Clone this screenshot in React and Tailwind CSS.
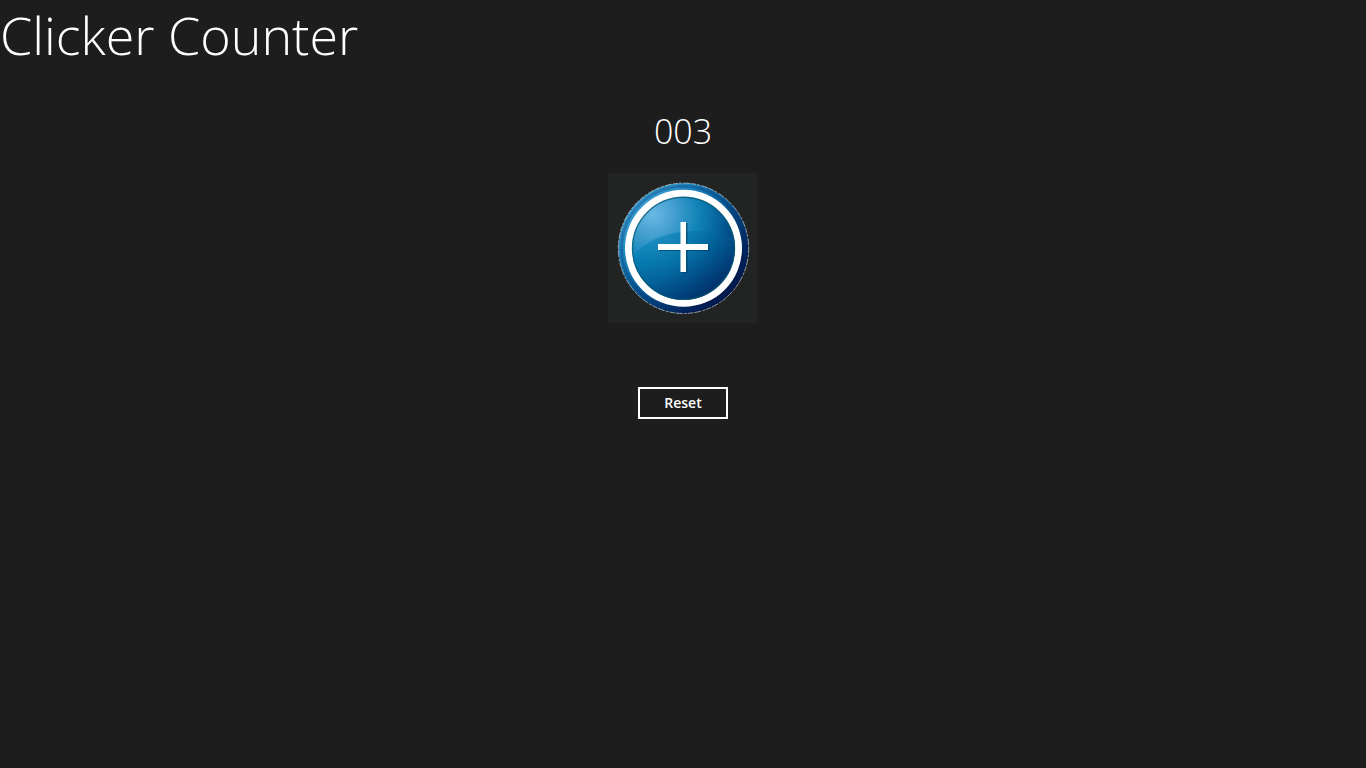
import { useState } from "react";

// Glossy round plus icon
const PlusIcon = () => (
  <svg viewBox="0 0 150 150" className="w-full h-full" aria-hidden="true">
    <defs>
      <linearGradient id="rim" x1="0.1" y1="0.1" x2="0.88" y2="0.88">
        <stop offset="0" stopColor="#46a9dc" />
        <stop offset="0.25" stopColor="#1c84bd" />
        <stop offset="0.55" stopColor="#04508c" />
        <stop offset="0.85" stopColor="#021f56" />
        <stop offset="1" stopColor="#010f3c" />
      </linearGradient>
      <radialGradient id="face" cx="0.2" cy="0.17" r="0.95">
        <stop offset="0" stopColor="#6bb9e4" />
        <stop offset="0.22" stopColor="#449fd0" />
        <stop offset="0.48" stopColor="#0f82b6" />
        <stop offset="0.72" stopColor="#045c96" />
        <stop offset="1" stopColor="#012a66" />
      </radialGradient>
      <linearGradient id="shade" x1="0" y1="0.2" x2="0.8" y2="1">
        <stop offset="0" stopColor="#0089bd" stopOpacity="0.6" />
        <stop offset="0.45" stopColor="#00639b" stopOpacity="0.45" />
        <stop offset="1" stopColor="#002460" stopOpacity="0.7" />
      </linearGradient>
      <clipPath id="faceClip">
        <circle cx="75.5" cy="75.3" r="51.5" />
      </clipPath>
    </defs>
    <circle cx="75.5" cy="75.3" r="65" fill="url(#rim)" />
    <circle
      cx="75.5"
      cy="75.3"
      r="65.2"
      fill="none"
      stroke="#d9eef5"
      strokeWidth="0.6"
      strokeDasharray="5 1 3 1.5 7 1"
    />
    <circle cx="75.5" cy="75.3" r="62" fill="none" stroke="#01306b" strokeOpacity="0.3" strokeWidth="3" />
    <circle cx="75.5" cy="75.3" r="58.5" fill="#ffffff" />
    <circle cx="75.5" cy="75.3" r="51.5" fill="url(#face)" />
    <path
      d="M20 90 C36 65 62 58 90 58 C106 58 120 62 130 66 V130 H20 Z"
      fill="url(#shade)"
      clipPath="url(#faceClip)"
    />
    <circle cx="75.5" cy="75.3" r="51" fill="none" stroke="#00556f" strokeOpacity="0.7" strokeWidth="1.4" />
    <path d="M74 50h5.500v22h22v6h-22v22h-5.500v-22h-23v-6h23z" fill="#003e64" fillOpacity="0.65" />
    <path d="M72.500 49h5.500v22h22v6h-22v22h-5.500v-22h-22.500v-6h22.500z" fill="#ffffff" />
  </svg>
);

const App = () => {
  const [count, setCount] = useState(3);

  return (
    <div className="min-h-screen bg-[#1d1d1d] text-white font-['Open_Sans','Noto_Sans',sans-serif]">
      <h1 className="text-[52px] leading-[69px] font-light">Clicker Counter</h1>

      <main className="flex flex-col items-center pt-10">
        {/* Current count */}
        <output className="text-[34px] leading-[44px] font-light">
          {String(count).padStart(3, "0")}
        </output>

        {/* Increment */}
        <button
          type="button"
          aria-label="Add one"
          className="mt-5 size-[150px] bg-[#222424] cursor-pointer"
          onClick={() => setCount(count + 1)}
        >
          <PlusIcon />
        </button>

        {/* Reset */}
        <button
          type="button"
          className="mt-16 h-8 w-[90px] border-2 border-white text-sm font-semibold cursor-pointer"
          onClick={() => setCount(0)}
        >
          Reset
        </button>
      </main>
    </div>
  );
};

export default App;
